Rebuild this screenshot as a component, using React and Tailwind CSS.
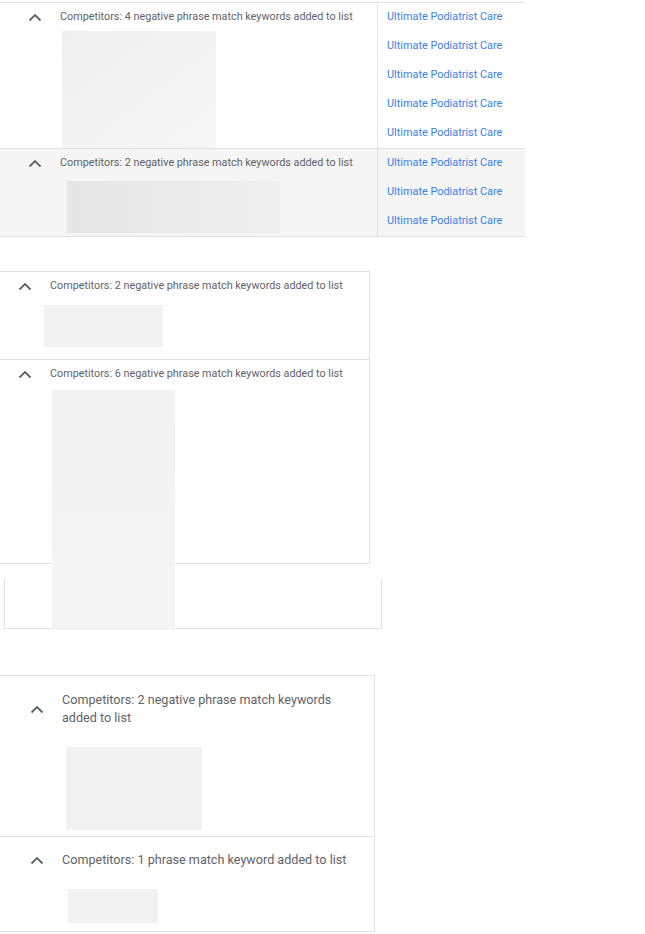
import React from "react";

function Chevron() {
  return (
    <svg width="14" height="9" viewBox="0 0 14 9" className="shrink-0">
      <polyline points="1.5,7.5 7,2 12.5,7.5" fill="none" stroke="#5f6368" strokeWidth="1.8" />
    </svg>
  );
}

const LINK = "Ultimate Podiatrist Care";

function Links({ n }) {
  return (
    <div className="flex flex-col">
      {Array.from({ length: n }).map((_, i) => (
        <div key={i} className="h-[29px] flex items-center pl-[9px] text-[10.9px] text-[#3d80e6]">
          {LINK}
        </div>
      ))}
    </div>
  );
}

export default function App() {
  return (
    <div className="w-[645px] h-[934px] bg-white overflow-hidden" style={{ fontFamily: "Roboto, 'Liberation Sans', sans-serif" }}>
      {/* Section 1 */}
      <div className="mt-[2px] w-[525px] border-t border-b border-[#e2e2e2]">
        <div className="flex border-b border-[#e2e2e2]">
          <div className="w-[378px] border-r border-[#e6e6e6] flex flex-col">
            <div className="h-[28px] flex items-center pl-[28px] gap-[18px] text-[10.8px] text-[#5f6368]">
              <Chevron />
              <span>Competitors: 4 negative phrase match keywords added to list</span>
            </div>
            <div className="ml-[62px] w-[154px] h-[117px] bg-gradient-to-br from-[#efefef] to-[#f7f7f7]" />
          </div>
          <div className="flex-1">
            <Links n={5} />
          </div>
        </div>
        <div className="flex bg-[#f5f5f5]">
          <div className="w-[378px] border-r border-[#e6e6e6] flex flex-col">
            <div className="h-[28px] flex items-center pl-[28px] gap-[18px] text-[10.8px] text-[#5f6368]">
              <Chevron />
              <span>Competitors: 2 negative phrase match keywords added to list</span>
            </div>
            <div className="mt-[4px] ml-[67px] w-[213px] h-[52px] bg-gradient-to-r from-[#e6e6e6] to-[#efefef]" />
            <div className="h-[3px]" />
          </div>
          <div className="flex-1">
            <Links n={3} />
          </div>
        </div>
      </div>

      {/* Section 2 */}
      <div className="mt-[34px] w-[370px] border-t border-r border-b border-[#e2e2e2]">
        <div className="border-b border-[#e2e2e2] pb-[12px]">
          <div className="h-[28px] flex items-center pl-[18px] gap-[18px] text-[10.8px] text-[#5f6368]">
            <Chevron />
            <span>Competitors: 2 negative phrase match keywords added to list</span>
          </div>
          <div className="mt-[5px] ml-[44px] w-[119px] h-[42px] bg-[#f2f2f2]" />
        </div>
        <div>
          <div className="h-[29px] flex items-center pl-[18px] gap-[18px] text-[10.8px] text-[#5f6368]">
            <Chevron />
            <span>Competitors: 6 negative phrase match keywords added to list</span>
          </div>
          <div className="relative z-10 mt-[1px] ml-[52px] w-[123px] h-[240px] mb-[-67px] bg-gradient-to-b from-[#f2f2f2] to-[#f5f5f5]" />
        </div>
      </div>
      <div className="mt-[15px] ml-[4px] w-[378px] h-[50px] border-l border-r border-b border-[#e2e2e2]" />

      {/* Section 3 */}
      <div className="mt-[46px] w-[375px] border-t border-r border-b border-[#e2e2e2]">
        <div className="border-b border-[#e2e2e2] pt-[15px] pb-[6px]">
          <div className="flex items-center pl-[30px] gap-[18px] text-[12.6px] leading-[18px] text-[#5f6368]">
            <Chevron />
            <span className="w-[295px]">Competitors: 2 negative phrase match keywords added to list</span>
          </div>
          <div className="mt-[20px] ml-[66px] w-[136px] h-[83px] bg-[#f2f2f2]" />
        </div>
        <div className="pt-[14px] pb-[8px]">
          <div className="flex items-center pl-[30px] gap-[18px] text-[12.6px] leading-[18px] text-[#5f6368]">
            <Chevron />
            <span className="w-[295px]">Competitors: 1 phrase match keyword added to list</span>
          </div>
          <div className="mt-[20px] ml-[68px] w-[90px] h-[34px] bg-[#f2f2f2]" />
        </div>
      </div>
    </div>
  );
}
